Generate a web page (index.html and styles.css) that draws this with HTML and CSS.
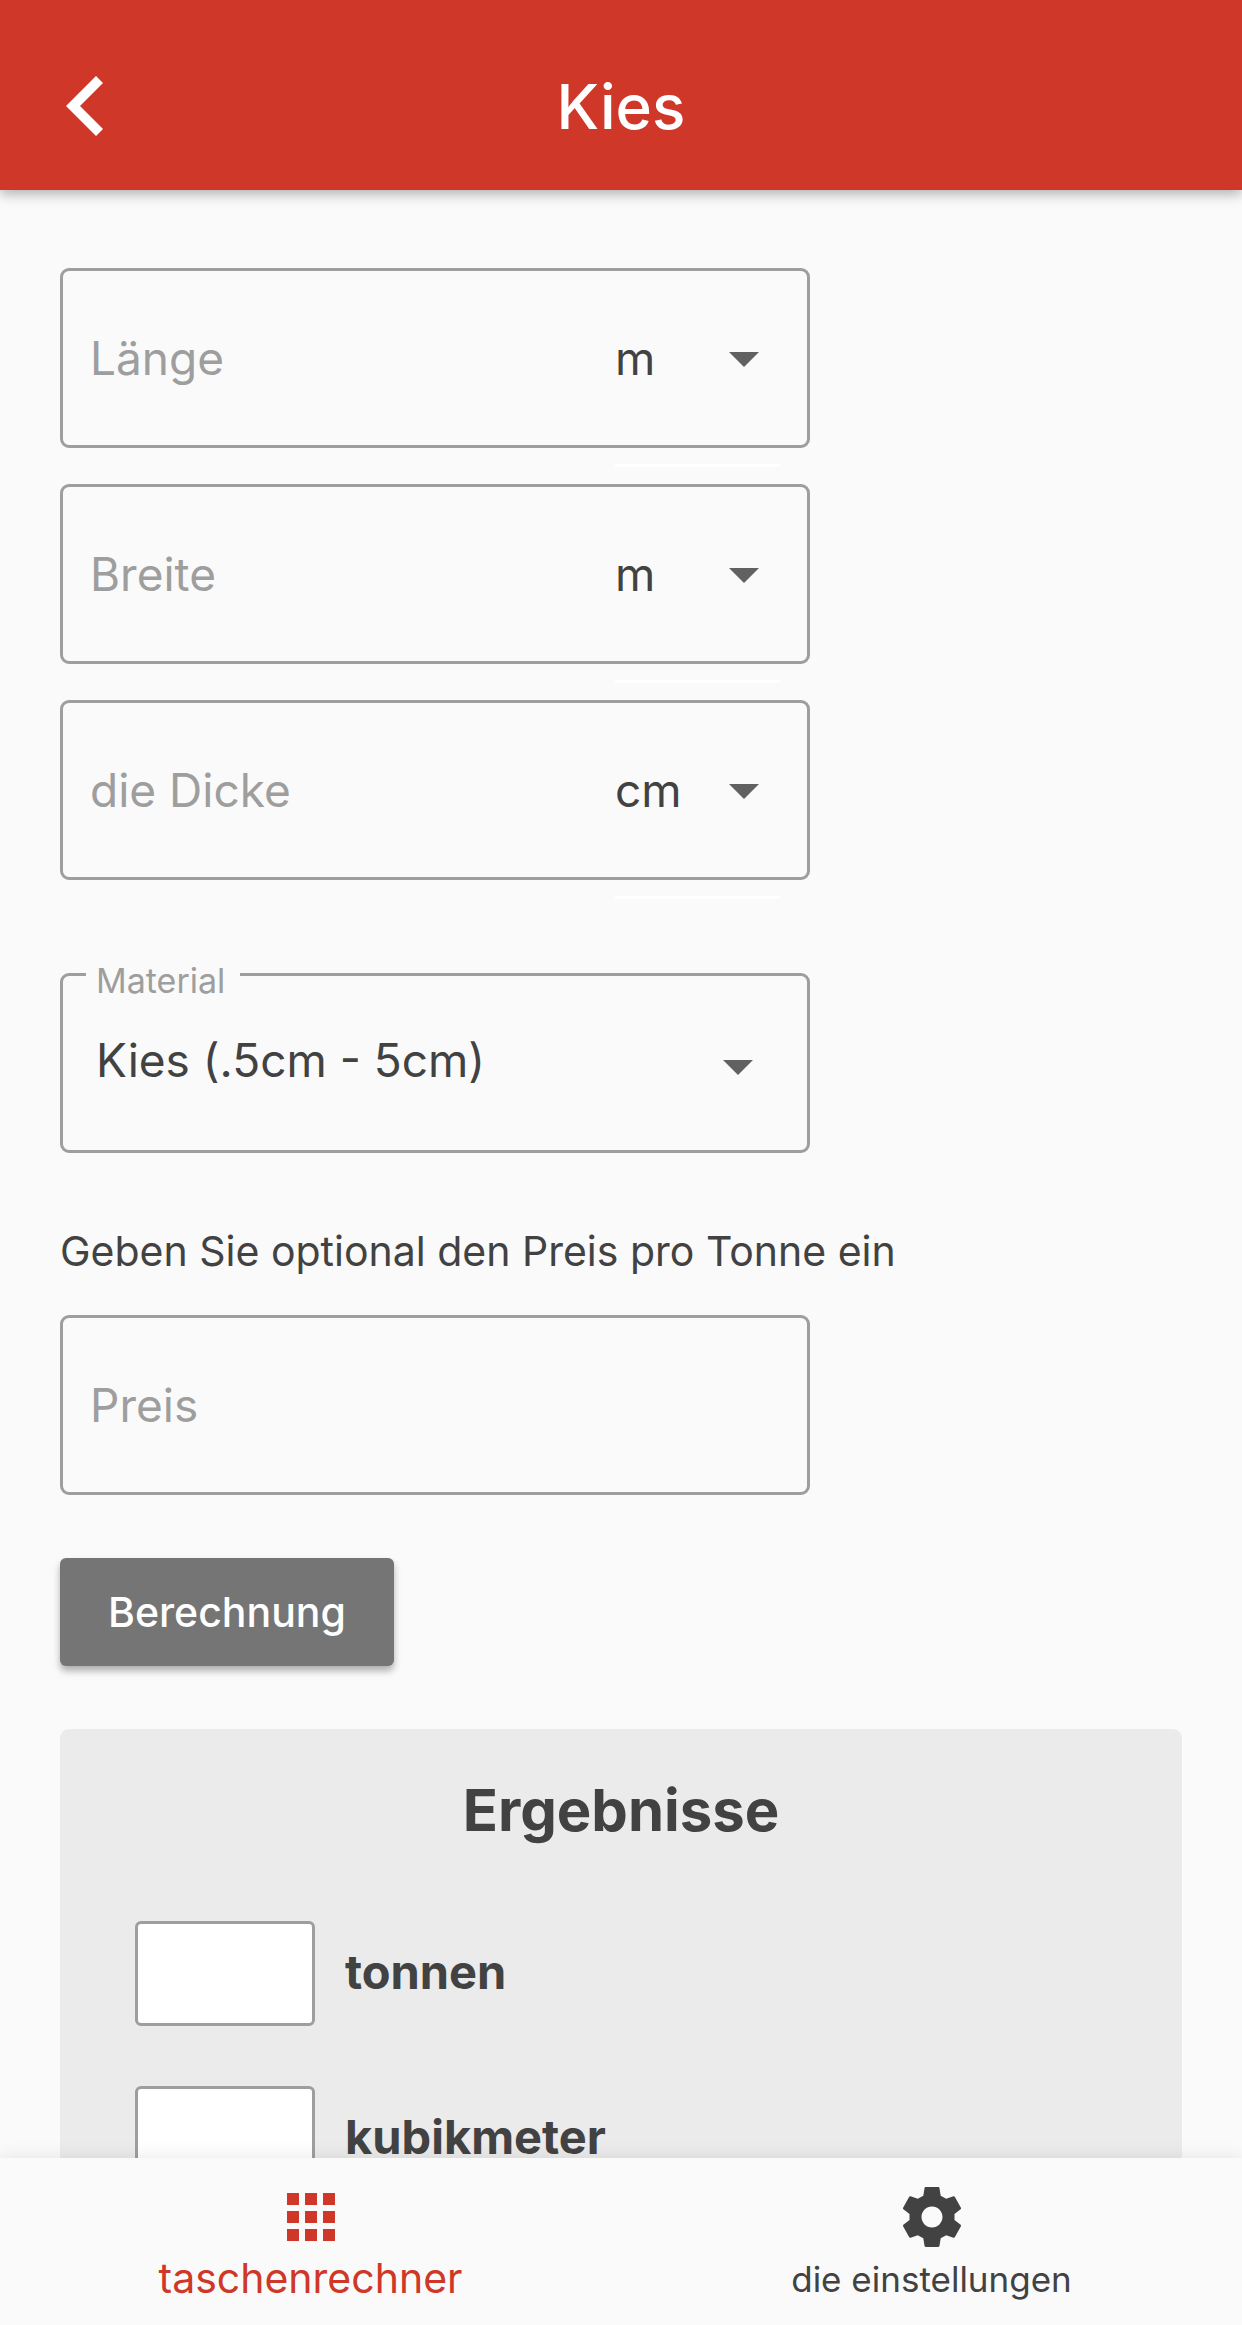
FILE: index.html
```html
<!DOCTYPE html>
<html lang="de">
<head>
  <meta charset="UTF-8">
  <meta name="viewport" content="width=device-width, initial-scale=1.0">
  <title>Kies</title>
  <link rel="stylesheet" href="styles.css">
</head>
<body>
  <header class="app-bar">
    <button type="button" class="back" aria-label="Zurück">
      <svg viewBox="0 0 37 60"><path d="M30 0l7 7-23 23 23 23-7 7L0 30z"/></svg>
    </button>
    <h1>Kies</h1>
  </header>

  <main class="content">
    <form class="calculator">
      <div class="dimensions">
        <div class="field">
          <input type="text" inputmode="decimal" placeholder="Länge" aria-label="Länge">
          <div class="unit">
            <select aria-label="Einheit Länge">
              <option>m</option>
              <option>cm</option>
            </select>
            <svg class="arrow" viewBox="0 0 24 24"><path d="M7 10l5 5 5-5z"/></svg>
          </div>
        </div>
        <div class="field">
          <input type="text" inputmode="decimal" placeholder="Breite" aria-label="Breite">
          <div class="unit">
            <select aria-label="Einheit Breite">
              <option>m</option>
              <option>cm</option>
            </select>
            <svg class="arrow" viewBox="0 0 24 24"><path d="M7 10l5 5 5-5z"/></svg>
          </div>
        </div>
        <div class="field">
          <input type="text" inputmode="decimal" placeholder="die Dicke" aria-label="die Dicke">
          <div class="unit">
            <select aria-label="Einheit Dicke">
              <option>cm</option>
              <option>m</option>
            </select>
            <svg class="arrow" viewBox="0 0 24 24"><path d="M7 10l5 5 5-5z"/></svg>
          </div>
        </div>
      </div>

      <div class="field material">
        <label for="material">Material</label>
        <select id="material">
          <option>Kies (.5cm - 5cm)</option>
        </select>
        <svg class="arrow" viewBox="0 0 24 24"><path d="M7 10l5 5 5-5z"/></svg>
      </div>

      <label class="hint" for="price">Geben Sie optional den Preis pro Tonne ein</label>
      <div class="field">
        <input type="text" inputmode="decimal" id="price" placeholder="Preis">
      </div>

      <button type="button" class="submit">Berechnung</button>
    </form>

    <section class="results">
      <h2>Ergebnisse</h2>
      <div class="result">
        <input type="text" id="tons" readonly>
        <label for="tons">tonnen</label>
      </div>
      <div class="result">
        <input type="text" id="cubic" readonly>
        <label for="cubic">kubikmeter</label>
      </div>
    </section>
  </main>

  <nav class="bottom-nav">
    <a href="#" class="active">
      <svg viewBox="0 0 24 24"><path d="M4 8h4V4H4v4zm6 12h4v-4h-4v4zm-6 0h4v-4H4v4zm0-6h4v-4H4v4zm6 0h4v-4h-4v4zm6-10v4h4V4h-4zm-6 4h4V4h-4v4zm6 6h4v-4h-4v4zm0 6h4v-4h-4v4z"/></svg>
      <span>taschenrechner</span>
    </a>
    <a href="#">
      <svg viewBox="0 0 24 24"><path fill-rule="evenodd" d="M19.500 13l2.040 1.600c.16.130.2.320.1.500l-2 3.600c-.1.200-.3.260-.5.180l-2.400-.82-1.840 1.040-.4 2.500c-.03.240-.2.400-.44.400h-4.120c-.24 0-.41-.16-.44-.4l-.4-2.500-1.840-1.040-2.400.82c-.2.080-.4.020-.5-.18l-2-3.600c-.1-.18-.06-.37.1-.5L4.500 13v-2L2.460 9.400c-.16-.13-.2-.32-.1-.5l2-3.600c.1-.2.3-.26.5-.18l2.400.82L9.100 4.900l.4-2.500c.03-.24.2-.4.440-.4h4.120c.24 0 .41.16.44.4l.4 2.500 1.840 1.040 2.400-.82c.2-.08.4-.02.5.18l2 3.600c.1.18.06.37-.1.500L19.500 11zM12 15.500c1.930 0 3.500-1.570 3.500-3.500S13.930 8.500 12 8.500 8.500 10.070 8.500 12s1.570 3.500 3.500 3.500z"/></svg>
      <span>die einstellungen</span>
    </a>
  </nav>
</body>
</html>
```
FILE: styles.css
```css
* {
  margin: 0;
  padding: 0;
  box-sizing: border-box;
}

body {
  height: 100vh;
  display: flex;
  flex-direction: column;
  font-family: Inter, "Liberation Sans", sans-serif;
  font-size: 46px;
  color: #424242;
  background-color: #fafafa;
}

input, select, button {
  font: inherit;
  color: inherit;
  border: none;
  background: none;
}

svg {
  display: block;
  fill: currentColor;
}

/* Kopfzeile */
.app-bar {
  flex: none;
  display: grid;
  grid-template-columns: 120px 1fr 120px;
  align-items: center;
  height: 190px;
  padding: 30px 0 8px;
  color: white;
  background-color: #cf3729;
  box-shadow: 0 4px 12px rgba(0, 0, 0, 0.3);
  z-index: 1;
}

.app-bar h1 {
  font-size: 62px;
  font-weight: 500;
  text-align: center;
}

.back {
  padding-left: 66px;
  cursor: pointer;
}

.back svg {
  width: 37px;
  height: 60px;
}

/* Inhalt */
.content {
  flex: 1;
  min-height: 0;
  overflow-y: auto;
  scrollbar-width: none;
  padding: 78px 60px 60px;
}

.dimensions {
  display: grid;
  gap: 36px;
}

.field {
  position: relative;
  display: flex;
  align-items: center;
  max-width: 750px;
  height: 180px;
  padding: 0 27px;
  border: 3px solid #9e9e9e;
  border-radius: 9px;
}

.field input {
  flex: 1;
  min-width: 0;
  height: 100%;
  outline: none;
}

.field input::placeholder {
  color: #9e9e9e;
  opacity: 1;
}

.unit {
  display: flex;
  align-items: center;
  width: 165px;
  height: 100%;
}

/* weiße Linie unter der Einheit */
.unit::after {
  content: "";
  position: absolute;
  right: 27px;
  bottom: -22px;
  width: 165px;
  height: 3px;
  background-color: white;
}

select {
  flex: 1;
  height: 100%;
  margin-right: -72px;
  appearance: none;
  outline: none;
  cursor: pointer;
}

.arrow {
  flex: none;
  width: 72px;
  height: 72px;
  color: #616161;
  pointer-events: none;
}

.material {
  margin-top: 93px;
  padding: 0 33px;
}

.material select {
  padding-bottom: 6px;
}

.material .arrow {
  margin-top: 6px;
}

.material label {
  position: absolute;
  top: -16px;
  left: 23px;
  padding: 0 15px 0 10px;
  font-size: 34px;
  line-height: 42px;
  color: #9e9e9e;
  background-color: #fafafa;
}

.hint {
  display: block;
  margin: 73px 0 38px;
  font-size: 41px;
  line-height: 51px;
}

.submit {
  height: 108px;
  margin-top: 63px;
  padding: 0 48px;
  font-size: 41px;
  font-weight: 500;
  color: white;
  background-color: #757575;
  border-radius: 6px;
  box-shadow: 0 5px 7px rgba(0, 0, 0, 0.3);
  cursor: pointer;
}

/* Ergebnisse */
.results {
  margin-top: 63px;
  padding: 45px 75px 60px;
  background-color: #ebebeb;
  border-radius: 9px;
}

.results h2 {
  margin-bottom: 75px;
  font-size: 58px;
  font-weight: 700;
  line-height: 72px;
  text-align: center;
}

.result {
  display: flex;
  align-items: center;
  gap: 30px;
  margin-bottom: 60px;
}

.result input {
  width: 180px;
  height: 105px;
  background-color: white;
  border: 3px solid #9e9e9e;
  border-radius: 6px;
}

.result label {
  padding-bottom: 4px;
  font-size: 47px;
  font-weight: 700;
}

/* Navigation unten */
.bottom-nav {
  flex: none;
  display: flex;
  height: 167px;
  background-color: #fafafa;
  box-shadow: 0 -2px 16px rgba(0, 0, 0, 0.08);
  z-index: 1;
}

.bottom-nav a {
  flex: 1;
  display: flex;
  flex-direction: column;
  align-items: center;
  padding-top: 23px;
  font-size: 35px;
  line-height: 52px;
  color: #424242;
  text-decoration: none;
}

.bottom-nav svg {
  width: 72px;
  height: 72px;
}

.bottom-nav .active {
  font-size: 41px;
  line-height: 50px;
  color: #cf3729;
}
```
